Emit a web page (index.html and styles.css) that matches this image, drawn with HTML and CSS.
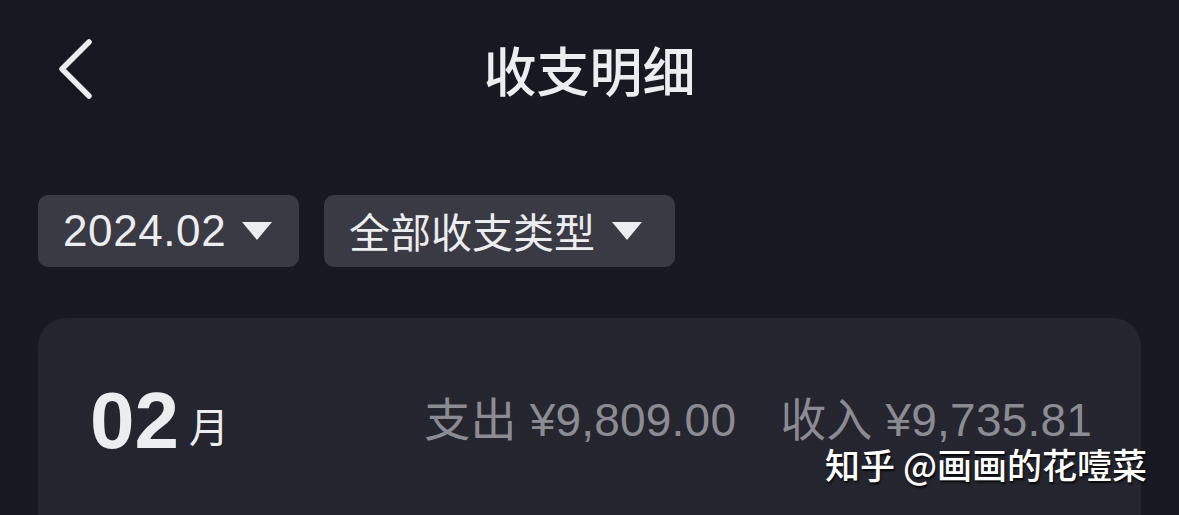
FILE: index.html
```html
<!DOCTYPE html>
<html lang="zh-CN">
<head>
  <meta charset="UTF-8">
  <title>收支明细</title>
  <link rel="stylesheet" href="styles.css">
</head>
<body>
<div class="page">
  <div class="header">
    <a class="back" href="#">
      <svg width="40" height="64" viewBox="0 0 40 64">
        <path d="M31 4 L4 31 L31 58" fill="none" stroke="#ecedf0" stroke-width="5.5" stroke-linecap="round" stroke-linejoin="round"/>
      </svg>
    </a>
    <h1 class="title">收支明细</h1>
  </div>

  <div class="filters">
    <div class="pill pill-date">
      <span>2024.02</span>
      <i class="arrow"></i>
    </div>
    <div class="pill pill-type">
      <span>全部收支类型</span>
      <i class="arrow"></i>
    </div>
  </div>

  <div class="card">
    <div class="summary">
      <div class="month"><b>02</b><span>月</span></div>
      <div class="totals">
        <span>支出 ¥9,809.00</span>
        <span>收入 ¥9,735.81</span>
      </div>
    </div>
  </div>

  <div class="mark">知乎 @画画的花噎菜</div>
</div>
</body>
</html>
```

FILE: styles.css
```css
* {
  margin: 0;
  padding: 0;
  box-sizing: border-box;
}

body {
  background-color: #161922;
  font-family: "Liberation Sans", "Noto Sans CJK SC", sans-serif;
  color: #ecedf0;
  overflow: hidden;
}

.page {
  position: relative;
  width: 1179px;
  height: 515px;
  overflow: hidden;
}

.header {
  height: 140px;
  position: relative;
  display: flex;
  align-items: center;
  justify-content: center;
}

.back {
  position: absolute;
  left: 58px;
  top: 38px;
  display: block;
}

.back svg {
  display: block;
}

.title {
  font-family: "Noto Sans CJK SC", sans-serif;
  font-size: 53px;
  font-weight: 500;
  color: #ecedf0;
  margin-top: -2px;
}

.filters {
  display: flex;
  gap: 25px;
  padding: 55px 38px 0;
}

.pill {
  height: 72px;
  background-color: #3a3a44;
  border-radius: 10px;
  display: flex;
  align-items: center;
  padding: 0 26px 0 25px;
  font-size: 44px;
  letter-spacing: 0.6px;
  color: #ecedf0;
}

.pill-date {
  width: 261px;
}

.pill-type {
  width: 351px;
  font-family: "Noto Sans CJK SC", sans-serif;
  font-size: 41px;
  letter-spacing: 0;
}

.pill-type span {
  margin-top: -3px;
}

.arrow {
  width: 0;
  height: 0;
  border-left: 15px solid transparent;
  border-right: 15px solid transparent;
  border-top: 18px solid #ecedf0;
  margin-left: 16px;
}

.pill-type .arrow {
  margin-left: 17px;
}

.card {
  margin: 51px 38px 0;
  height: 197px;
  overflow: hidden;
  background-color: #25252f;
  border-radius: 28px 28px 0 0;
  padding: 0 49px 0 52px;
}

.summary {
  display: flex;
  align-items: center;
  justify-content: space-between;
  height: 206px;
}

.month {
  display: flex;
  align-items: baseline;
}

.month b {
  font-size: 80px;
  font-weight: 700;
}

.month span {
  font-family: "Noto Sans CJK SC", sans-serif;
  font-size: 40px;
  margin-left: 10px;
  position: relative;
  top: -6px;
}

.totals {
  display: flex;
  gap: 44px;
  font-size: 46px;
  line-height: 1;
  letter-spacing: 0.2px;
  color: #8b8b94;
  margin-top: -3px;
}

.mark {
  position: absolute;
  right: 32px;
  top: 446px;
  font-family: "Noto Sans CJK SC", sans-serif;
  font-size: 35px;
  line-height: 1.05;
  font-weight: 500;
  color: #ffffff;
  text-shadow: 1px 2px 2px rgba(0, 0, 0, 0.8);
}
```
